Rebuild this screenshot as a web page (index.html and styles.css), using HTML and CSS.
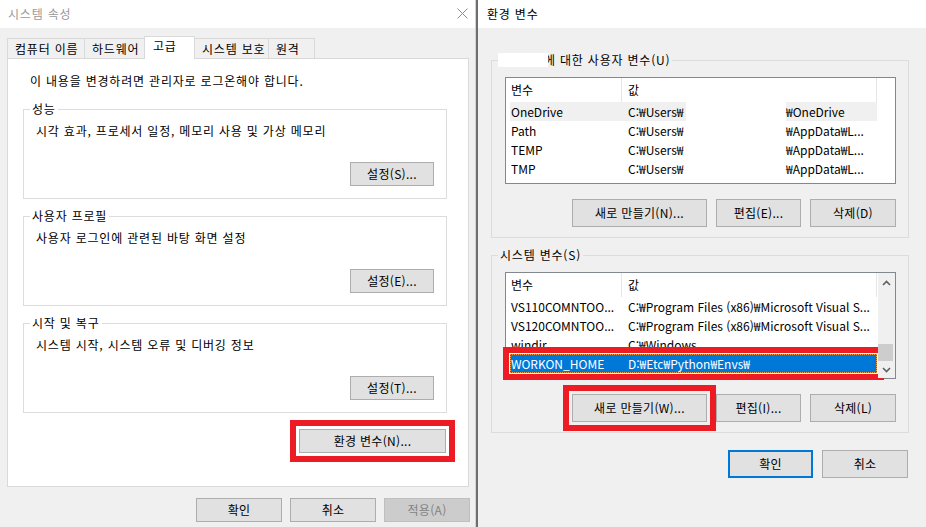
FILE: index.html
```html
<!DOCTYPE html>
<html lang="ko">
<head>
    <meta charset="UTF-8">
    <meta name="viewport" content="width=device-width, initial-scale=1.0">
    <title>시스템 속성 - 환경 변수</title>
    <link rel="stylesheet" href="styles.css">
</head>
<body>

<div class="desktop">

    <!-- 시스템 속성 -->
    <div class="dialog sysprops">
        <div class="titlebar">
            <span class="title inactive">시스템 속성</span>
            <svg class="close" width="11" height="11" viewBox="0 0 11 11">
                <path d="M0.5 0.5L10.5 10.5M10.5 0.5L0.5 10.5" stroke="#8c8c8c" stroke-width="1" fill="none"/>
            </svg>
        </div>

        <div class="sys-body">
            <div class="tabs">
                <div class="tab tab-name">컴퓨터 이름</div>
                <div class="tab tab-hw">하드웨어</div>
                <div class="tab tab-adv active">고급</div>
                <div class="tab tab-prot">시스템 보호</div>
                <div class="tab tab-remote">원격</div>
            </div>

            <div class="panel">
                <p class="note">이 내용을 변경하려면 관리자로 로그온해야 합니다.</p>

                <fieldset class="group">
                    <legend>성능</legend>
                    <div class="group-body">
                        <div class="group-text">시각 효과, 프로세서 일정, 메모리 사용 및 가상 메모리</div>
                        <div class="group-actions">
                            <button class="btn btn-set">설정(S)...</button>
                        </div>
                    </div>
                </fieldset>

                <fieldset class="group">
                    <legend>사용자 프로필</legend>
                    <div class="group-body">
                        <div class="group-text">사용자 로그인에 관련된 바탕 화면 설정</div>
                        <div class="group-actions">
                            <button class="btn btn-set">설정(E)...</button>
                        </div>
                    </div>
                </fieldset>

                <fieldset class="group">
                    <legend>시작 및 복구</legend>
                    <div class="group-body">
                        <div class="group-text">시스템 시작, 시스템 오류 및 디버깅 정보</div>
                        <div class="group-actions">
                            <button class="btn btn-set">설정(T)...</button>
                        </div>
                    </div>
                </fieldset>

                <div class="env-row">
                    <button class="btn btn-env marked">환경 변수(N)...</button>
                </div>
            </div>

            <div class="sys-actions">
                <button class="btn btn-foot">확인</button>
                <button class="btn btn-foot">취소</button>
                <button class="btn btn-foot disabled">적용(A)</button>
            </div>
        </div>
    </div>

    <div class="divider"></div>

    <!-- 환경 변수 -->
    <div class="dialog envvars">
        <div class="titlebar">
            <span class="title">환경 변수</span>
        </div>

        <div class="env-body">
            <fieldset class="env-group">
                <legend><span class="redact-name"></span>에 대한 사용자 변수(U)</legend>
                <div class="env-group-body">
                    <div class="listview">
                        <div class="lv-main">
                            <div class="lv-header">
                                <div class="lv-hcell lv-hname">변수</div>
                                <div class="lv-hcell lv-hvalue">값</div>
                            </div>
                            <div class="lv-rows">
                                <div class="lv-row hover">
                                    <div class="lv-name">OneDrive</div>
                                    <div class="lv-value"><span class="clip">C:₩Users₩</span><span class="redact"></span>₩OneDrive</div>
                                </div>
                                <div class="lv-row">
                                    <div class="lv-name">Path</div>
                                    <div class="lv-value"><span class="clip">C:₩Users₩</span><span class="redact"></span>₩AppData₩L...</div>
                                </div>
                                <div class="lv-row">
                                    <div class="lv-name">TEMP</div>
                                    <div class="lv-value"><span class="clip">C:₩Users₩</span><span class="redact"></span>₩AppData₩L...</div>
                                </div>
                                <div class="lv-row">
                                    <div class="lv-name">TMP</div>
                                    <div class="lv-value"><span class="clip">C:₩Users₩</span><span class="redact"></span>₩AppData₩L...</div>
                                </div>
                            </div>
                        </div>
                    </div>
                    <div class="env-actions">
                        <button class="btn btn-lg w-new">새로 만들기(N)...</button>
                        <button class="btn btn-lg w-edit">편집(E)...</button>
                        <button class="btn btn-lg w-del">삭제(D)</button>
                    </div>
                </div>
            </fieldset>

            <fieldset class="env-group">
                <legend>시스템 변수(S)</legend>
                <div class="env-group-body">
                    <div class="listview">
                        <div class="lv-main">
                            <div class="lv-header">
                                <div class="lv-hcell lv-hname">변수</div>
                                <div class="lv-hcell lv-hvalue">값</div>
                            </div>
                            <div class="lv-rows">
                                <div class="lv-row">
                                    <div class="lv-name">VS110COMNTOO...</div>
                                    <div class="lv-value">C:₩Program Files (x86)₩Microsoft Visual S...</div>
                                </div>
                                <div class="lv-row">
                                    <div class="lv-name">VS120COMNTOO...</div>
                                    <div class="lv-value">C:₩Program Files (x86)₩Microsoft Visual S...</div>
                                </div>
                                <div class="lv-row">
                                    <div class="lv-name">windir</div>
                                    <div class="lv-value">C:₩Windows</div>
                                </div>
                                <div class="lv-row selected">
                                    <div class="lv-name">WORKON_HOME</div>
                                    <div class="lv-value">D:₩Etc₩Python₩Envs₩</div>
                                </div>
                            </div>
                        </div>
                        <div class="lv-scroll">
                            <div class="sb-arrow sb-up">
                                <svg width="9" height="6" viewBox="0 0 9 6"><path d="M1 5L4.5 1.5L8 5" stroke="#606060" stroke-width="1.6" fill="none"/></svg>
                            </div>
                            <div class="sb-track"></div>
                            <div class="sb-thumb"></div>
                            <div class="sb-arrow sb-down">
                                <svg width="9" height="6" viewBox="0 0 9 6"><path d="M1 1L4.5 4.5L8 1" stroke="#606060" stroke-width="1.6" fill="none"/></svg>
                            </div>
                        </div>
                    </div>
                    <div class="env-actions">
                        <button class="btn btn-lg w-new marked">새로 만들기(W)...</button>
                        <button class="btn btn-lg w-edit">편집(I)...</button>
                        <button class="btn btn-lg w-del">삭제(L)</button>
                    </div>
                </div>
            </fieldset>

            <div class="env-footer">
                <button class="btn btn-lg w-edit default">확인</button>
                <button class="btn btn-lg w-del">취소</button>
            </div>
        </div>
    </div>

</div>

</body>
</html>
```

FILE: styles.css
```css
* {
    box-sizing: border-box;
}

html, body {
    margin: 0;
    padding: 0;
}

body {
    width: 926px;
    height: 527px;
    overflow: hidden;
    font-family: "Noto Sans CJK KR", sans-serif;
    font-size: 12px;
    color: #000;
    background-color: #f0f0f0;
}

.desktop {
    display: flex;
    height: 527px;
}

.dialog {
    display: flex;
    flex-direction: column;
    height: 527px;
    background-color: #f0f0f0;
}

.sysprops {
    width: 476px;
    border-right: 1px solid #d4d4d4;
}

.divider {
    width: 2px;
    background-color: #6e6e6e;
}

.envvars {
    width: 448px;
}

.titlebar {
    flex: none;
    height: 28px;
    display: flex;
    align-items: center;
    justify-content: space-between;
    padding: 0 7px 0 8px;
    background-color: #fff;
}

.envvars .titlebar {
    padding-left: 9px;
}

/* hangul in the reference is set a little wider than Noto */
.title,
.tab,
.note,
legend,
.group-text {
    letter-spacing: 0.8px;
}

.title {
    line-height: 16px;
}

.title.inactive {
    color: #999;
}

.close {
    margin-bottom: 2px;
}

/* buttons */
.btn {
    height: 24px;
    padding: 0;
    border: 1px solid #adadad;
    background-color: #e1e1e1;
    font: inherit;
    color: #000;
    line-height: 22px;
    text-align: center;
    white-space: nowrap;
    letter-spacing: 0.3px;
}

.btn.disabled {
    background-color: #cccccc;
    border-color: #bfbfbf;
    color: #838383;
}

.btn.default {
    border: 2px solid #0078d7;
}

.btn-lg {
    height: 28px;
    line-height: 26px;
}

.btn-lg.default {
    line-height: 24px;
}

.marked {
    outline: 6px solid #ed1c24;
    outline-offset: 3px;
}

/* system properties */
.sys-body {
    padding: 8px 0 0 7px;
}

.tabs {
    position: relative;
    z-index: 1;
    display: flex;
    align-items: flex-end;
    height: 23px;
}

.tab {
    height: 20px;
    margin-bottom: 1px;
    margin-left: -1px;
    padding-left: 7px;
    border: 1px solid #d9d9d9;
    border-bottom: none;
    background-color: #f0f0f0;
    line-height: 19px;
    white-space: nowrap;
}

.tab:first-child {
    margin-left: 0;
}

.tab.active {
    height: 23px;
    margin-bottom: 0;
    padding-left: 8px;
    background-color: #fff;
    line-height: 17px;
}

.tab-name { width: 78px; }
.tab-hw { width: 61px; }
.tab-adv { width: 51px; }
.tab-prot { width: 75px; }
.tab-remote { width: 47px; }

.panel {
    width: 462px;
    height: 429px;
    margin-top: -1px;
    padding: 14px 21px 0 15px;
    border: 1px solid #d9d9d9;
    background-color: #fff;
}

.note {
    margin: 0 0 0 7px;
    line-height: 16px;
}

.group {
    margin: 12px 0 0;
    padding: 0;
    border: 1px solid #dcdcdc;
}

.group + .group {
    margin-top: 9px;
}

legend {
    margin-left: 6px;
    padding: 0 2px;
    line-height: 16px;
}

.group-body {
    padding: 6px 12px 12px 12px;
}

.group-text {
    line-height: 16px;
}

.group-actions {
    display: flex;
    justify-content: flex-end;
    margin-top: 23px;
}

.btn-set {
    width: 84px;
}

.env-row {
    display: flex;
    justify-content: flex-end;
    margin-top: 16px;
    padding-right: 1px;
}

.btn-env {
    width: 147px;
}

.sys-actions {
    display: flex;
    justify-content: flex-end;
    gap: 8px;
    margin-top: 11px;
    padding-right: 5px;
}

.btn-foot {
    width: 86px;
}

/* environment variables */
.env-body {
    padding-left: 13px;
}

.env-group {
    width: 418px;
    margin: 24px 0 0;
    padding: 0;
    border: 1px solid #dcdcdc;
}

.env-group + .env-group {
    margin-top: 9px;
}

.redact-name {
    position: relative;
    display: inline-block;
    width: 50px;
    height: 14px;
    margin-left: -2px;
    margin-right: -4px;
    vertical-align: -2px;
    background-color: #fff;
}

.env-group-body {
    padding: 9px 12px 10px 13px;
}

.listview {
    display: flex;
    width: 391px;
    height: 107px;
    border: 1px solid #828790;
    background-color: #fff;
}

.lv-main {
    width: 372px;
}

.lv-header {
    display: flex;
    height: 24px;
}

.lv-hcell {
    border-right: 1px solid #e5e5e5;
    line-height: 23px;
}

.lv-hname {
    width: 116px;
    padding-left: 5px;
}

.lv-hvalue {
    width: 255px;
    padding-left: 6px;
}

.lv-rows {
    padding: 0 1px 0 4px;
}

.lv-row {
    display: flex;
    height: 19px;
    line-height: 19px;
    white-space: nowrap;
}

.lv-row.hover {
    background-color: #f0f0f0;
}

.lv-row.selected {
    border: 1px dotted #e8a048;
    background-color: #0078d7;
    color: #fff;
    line-height: 17px;
    outline: 6px solid #ed1c24;
    outline-offset: 1px;
}

.lv-name {
    width: 118px;
    padding-left: 1px;
    overflow: hidden;
}

.lv-row.selected .lv-name {
    width: 117px;
    padding-left: 0;
}

.lv-value {
    flex: 1;
    overflow: hidden;
}

.clip {
    display: inline-block;
    width: 58px;
    overflow: hidden;
    vertical-align: top;
}

.redact {
    display: inline-block;
    width: 100px;
    height: 19px;
    background-color: #fff;
    vertical-align: top;
}

.lv-scroll {
    display: flex;
    flex-direction: column;
    width: 17px;
    background-color: #f0f0f0;
}

.sb-arrow {
    display: flex;
    align-items: center;
    justify-content: center;
}

.sb-up {
    height: 20px;
}

.sb-down {
    height: 17px;
}

.sb-track {
    flex: 1;
}

.sb-thumb {
    width: 15px;
    height: 17px;
    background-color: #cdcdcd;
}

.env-actions {
    display: flex;
    justify-content: flex-end;
    gap: 9px;
    width: 391px;
    margin-top: 15px;
}

.w-new { width: 135px; }
.w-edit { width: 85px; }
.w-del { width: 86px; }

.env-footer {
    display: flex;
    justify-content: flex-end;
    gap: 9px;
    width: 417px;
    margin-top: 17px;
}
```
